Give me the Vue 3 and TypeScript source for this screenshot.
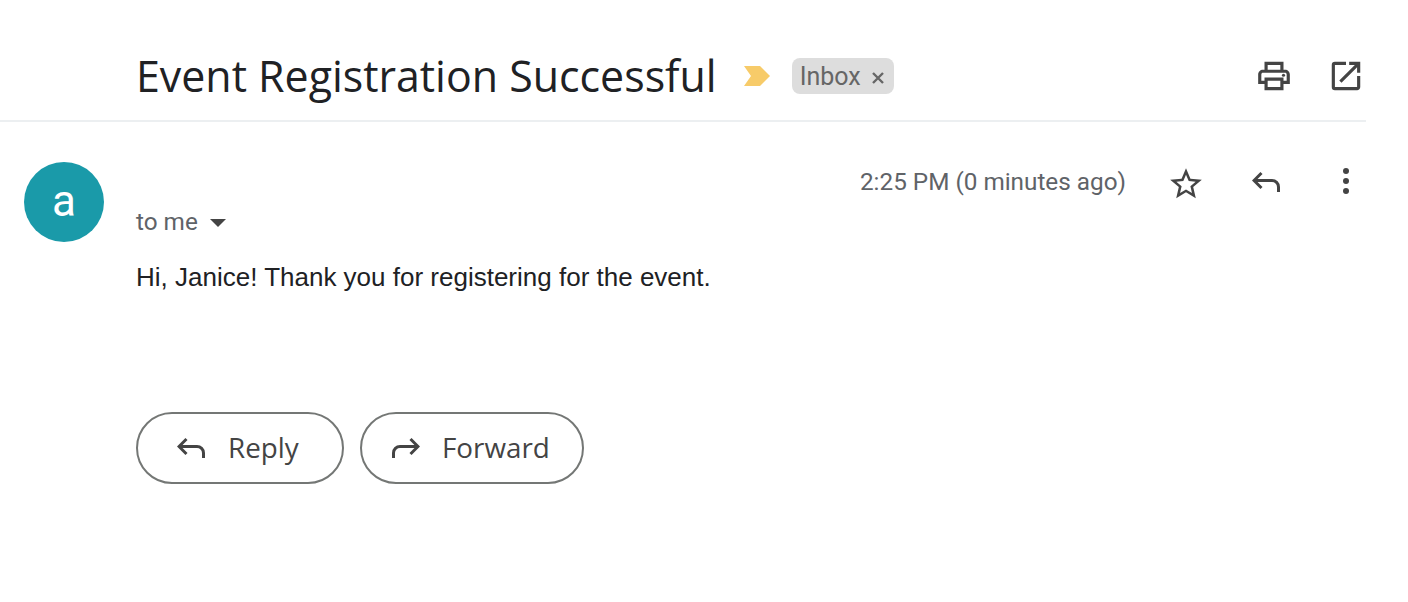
<script setup lang="ts">
const replyPath = 'M9.5 2 L2 9.5 L9.5 17 M2.5 9.5 H20 a6.5 6.5 0 0 1 6.5 6.5 V21';
</script>

<template>
  <main class="page">
    <header class="head">
      <h1 class="title">Event Registration Successful</h1>
      <svg class="marker" viewBox="0 0 26 20" aria-hidden="true"><path d="M0 0H16L26 10L16 20H0L7 10Z" /></svg>
      <span class="chip">Inbox<svg class="chip-x" viewBox="0 0 14 14"><path d="M2 2L12 12M12 2L2 12" /></svg></span>
      <div class="head-tools">
        <svg class="tool" viewBox="0 0 24 24"><path d="M19 8h-1V3H6v5H5c-1.66 0-3 1.34-3 3v6h4v4h12v-4h4v-6c0-1.66-1.34-3-3-3zM8 5h8v3H8V5zm8 12v2H8v-4h8v2zm2-2v-2H6v2H4v-4c0-.55.45-1 1-1h14c.55 0 1 .45 1 1v4h-2z" /><circle cx="18" cy="11.5" r="1" /></svg>
        <svg class="tool" viewBox="0 0 24 24"><path d="M19 19H5V5h7V3H5a2 2 0 00-2 2v14a2 2 0 002 2h14c1.1 0 2-.9 2-2v-7h-2v7zM14 3v2h3.59l-9.83 9.83 1.41 1.41L19 6.41V10h2V3h-7z" /></svg>
      </div>
    </header>

    <section class="message">
      <div class="avatar">a</div>
      <div class="content">
        <div class="meta">
          <span class="time">2:25 PM (0 minutes ago)</span>
          <svg class="tool star" viewBox="0 0 24 24"><path d="M22 9.24l-7.19-.62L12 2 9.19 8.63 2 9.24l5.46 4.73L5.82 21 12 17.27 18.18 21l-1.63-7.03L22 9.24zM12 15.4l-3.76 2.27 1-4.28-3.32-2.88 4.38-.38L12 6.1l1.71 4.04 4.38.38-3.32 2.88 1 4.28L12 15.4z" /></svg>
          <svg class="reply-icon meta-reply" viewBox="0 0 29 23"><path :d="replyPath" /></svg>
          <svg class="dots" viewBox="0 0 6 26"><circle cx="3" cy="3" r="3" /><circle cx="3" cy="13" r="3" /><circle cx="3" cy="23" r="3" /></svg>
        </div>
        <div class="to">to me<span class="caret"></span></div>
        <p class="body">Hi, Janice! Thank you for registering for the event.</p>
        <div class="actions">
          <button class="btn btn-reply" type="button">
            <svg class="reply-icon" viewBox="0 0 29 23"><path :d="replyPath" /></svg><span class="btn-label">Reply</span>
          </button>
          <button class="btn btn-forward" type="button">
            <svg class="reply-icon flip" viewBox="0 0 29 23"><path :d="replyPath" /></svg><span class="btn-label">Forward</span>
          </button>
        </div>
      </div>
    </section>
  </main>
</template>

<style>
html, body { background: #fff; }
</style>

<style scoped>
.page {
  width: 1366px;
  height: 602px;
  overflow: hidden;
  font-family: "Roboto", "Liberation Sans", sans-serif;
  color: #444;
}
.head {
  display: flex;
  align-items: center;
  height: 88px;
  padding: 32px 0 0 136px;
  border-bottom: 2px solid #eceff1;
}
.title {
  margin: -1px 0 0;
  font-family: "Open Sans", sans-serif;
  font-size: 42.9px;
  font-weight: 400;
  color: #202124;
  line-height: 86px;
}
.marker { width: 26px; height: 20px; margin-left: 27px; fill: #f7cb69; }
.chip {
  display: flex;
  align-items: center;
  height: 36px;
  margin-left: 22px;
  padding: 0 9px 0 8px;
  border-radius: 8px;
  background: #ddd;
  font-size: 25px;
  color: #666;
}
.chip-x { width: 14px; height: 14px; margin-left: 10px; margin-top: 4px; fill: none; stroke: #666; stroke-width: 2.4; }
.head-tools { display: flex; gap: 34px; margin-left: auto; margin-right: 1px; }
.tool { width: 38px; height: 38px; fill: #444; display: block; }
.message { display: flex; gap: 32px; padding: 40px 0 0 24px; }
.avatar {
  flex: none;
  width: 80px;
  height: 80px;
  border-radius: 50%;
  background: #1a9aa9;
  color: #fff;
  font-size: 44px;
  line-height: 78px;
  text-align: center;
}
.content { flex: 1; min-width: 0; }
.meta { display: flex; align-items: center; height: 38px; }
.time { margin-left: auto; margin-top: 1px; font-size: 24.3px; color: #5f6368; }
.star { margin-left: 41px; margin-top: 6px; }
.reply-icon { width: 29px; height: 23px; fill: none; stroke: #444; stroke-width: 3; display: block; }
.meta-reply { margin-left: 47px; margin-top: 2px; }
.dots { width: 6px; height: 26px; fill: #444; margin: 0 17px 0 62px; }
.to { display: flex; align-items: center; margin-top: 2px; font-size: 24.3px; line-height: 40px; color: #5f6368; }
.caret { width: 0; height: 0; margin: 2px 0 0 12px; border: 8px solid transparent; border-top: 8px solid #444; border-bottom: 0; }
.body { margin: 19px 0 0; font-family: "Liberation Sans", sans-serif; font-size: 26px; line-height: 32px; color: #202124; }
.actions { display: flex; gap: 16px; margin-top: 119px; }
.btn {
  display: flex;
  align-items: center;
  height: 72px;
  box-sizing: border-box;
  border: 2px solid #747775;
  border-radius: 36px;
  background: #fff;
  font-family: "Open Sans", sans-serif;
  font-size: 27.8px;
  font-weight: 500;
  color: #444;
  padding: 0;
}
.btn-label { margin-top: -3px; }
.btn-reply { width: 208px; padding-left: 39px; }
.btn-forward { width: 224px; padding-left: 29px; }
.btn .reply-icon { margin-right: 22px; }
.flip { transform: scaleX(-1); }
</style>
